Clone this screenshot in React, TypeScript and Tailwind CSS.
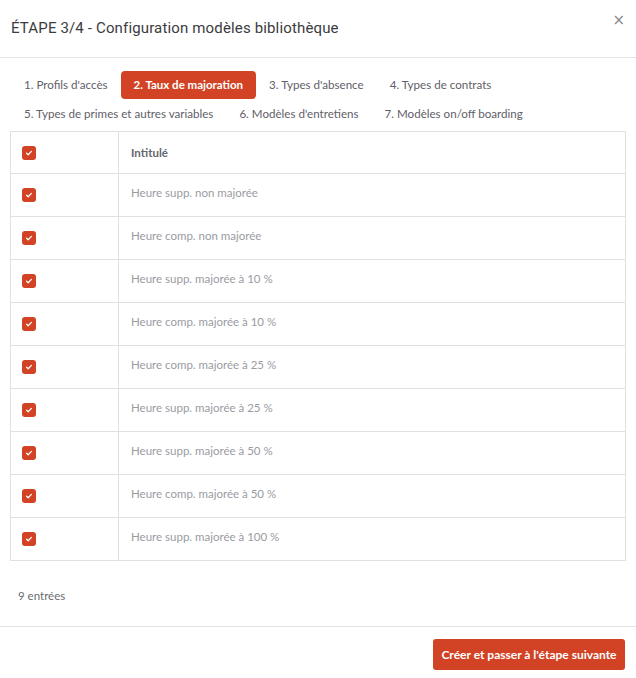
import React from "react";

const rows = [
  "Heure supp. non majorée",
  "Heure comp. non majorée",
  "Heure supp. majorée à 10 %",
  "Heure comp. majorée à 10 %",
  "Heure comp. majorée à 25 %",
  "Heure supp. majorée à 25 %",
  "Heure supp. majorée à 50 %",
  "Heure comp. majorée à 50 %",
  "Heure supp. majorée à 100 %",
];

const tabs1 = ["1. Profils d'accès", "2. Taux de majoration", "3. Types d'absence", "4. Types de contrats"];
const tabs2 = ["5. Types de primes et autres variables", "6. Modèles d'entretiens", "7. Modèles on/off boarding"];

function Check() {
  return (
    <div className="w-[14px] h-[14px] rounded-[3px] bg-[#d14324] flex items-center justify-center">
      <svg width="8" height="8" viewBox="0 0 8 8" fill="none">
        <path d="M1.6 4.2 L3.2 5.7 L6.4 2.4" stroke="white" strokeWidth="1.3" strokeLinecap="round" strokeLinejoin="round" />
      </svg>
    </div>
  );
}

export default function App() {
  return (
    <div className="w-[636px] h-[678px] bg-white flex flex-col" style={{ fontFamily: "Lato, 'Open Sans', sans-serif" }}>
      <div className="h-[58px] border-b border-[#e3e3e6] flex items-start justify-between pl-[11px] pr-[11px]">
        <div className="mt-[17px] text-[15px] text-[#3b3b40] tracking-[0.15px]" style={{ fontFamily: "Roboto, 'Liberation Sans', sans-serif" }}>
          ÉTAPE 3/4 - Configuration modèles bibliothèque
        </div>
        <div className="mt-[13px] text-[#8a8a90] text-[15px] leading-none" style={{ fontFamily: "'DejaVu Sans', sans-serif" }}>×</div>
      </div>
      <div className="px-[10px] pt-[13px] flex flex-col">
        <div className="flex pl-[1px] h-[28px]">
          {tabs1.map((t, i) => (
            <div
              key={t}
              className={
                i === 1
                  ? "px-[13px] h-[28px] flex items-center rounded-[4px] bg-[#d14324] text-white font-bold text-[11.5px]"
                  : "px-[13px] h-[28px] flex items-center text-[#5f6068] text-[11.6px]"
              }
            >
              {t}
            </div>
          ))}
        </div>
        <div className="flex pl-[1px] h-[28px] mt-[1px]">
          {tabs2.map((t) => (
            <div key={t} className="px-[13px] h-[28px] flex items-center text-[#5f6068] text-[11.6px]">
              {t}
            </div>
          ))}
        </div>
        <div className="mt-[3px] border border-[#e0e0e3]">
          <div className="flex h-[41px]">
            <div className="w-[108px] border-r border-[#e0e0e3] flex items-center pl-[11px]">
              <Check />
            </div>
            <div className="flex items-center pl-[12px] text-[11.5px] font-bold text-[#66676e]">Intitulé</div>
          </div>
          {rows.map((r) => (
            <div key={r} className="flex h-[43px] border-t border-[#e0e0e3]">
              <div className="w-[108px] border-r border-[#e0e0e3] flex items-center pl-[11px]">
                <Check />
              </div>
              <div className="flex items-center pl-[12px] pb-[4px] text-[11.5px] text-[#9a9ba2]">{r}</div>
            </div>
          ))}
        </div>
        <div className="mt-[26px] pl-[8px] text-[11.5px] text-[#6a6b72]">9 entrées</div>
      </div>
      <div className="mt-[22px] border-t border-[#e3e3e6] flex justify-end pr-[11px] pt-[12px]">
        <div className="h-[31px] w-[192px] rounded-[3px] bg-[#d14324] text-white text-[12px] font-bold flex items-center justify-center">
          Créer et passer à l'étape suivante
        </div>
      </div>
    </div>
  );
}
